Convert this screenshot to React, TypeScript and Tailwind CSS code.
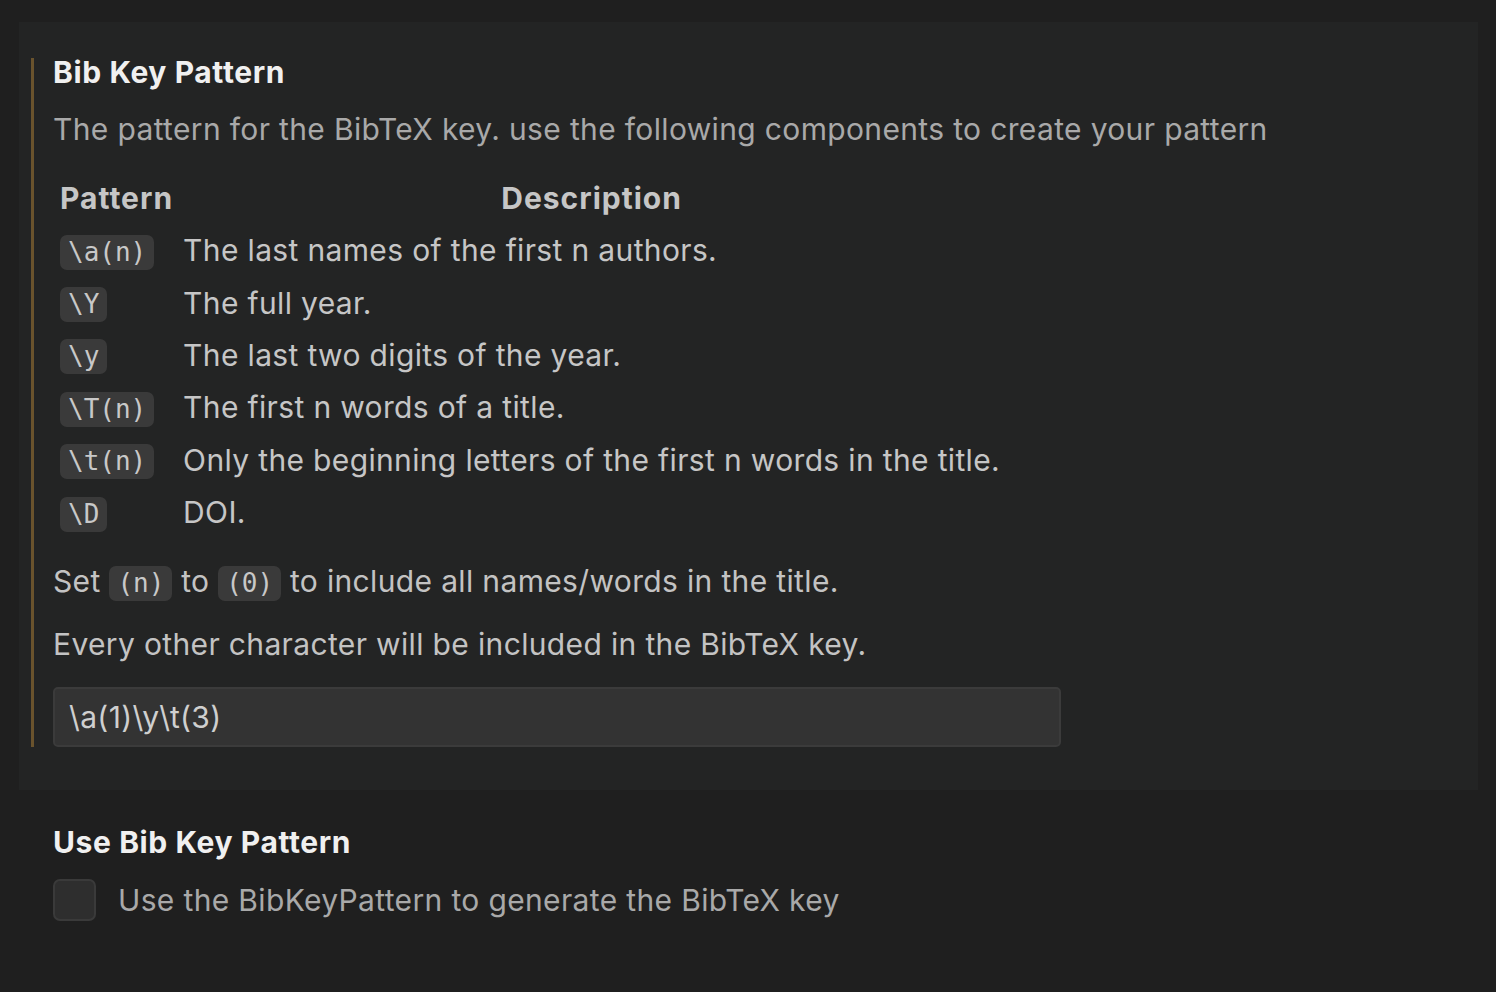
import React from "react";

const rows: { code: string; text: string }[] = [
  { code: "\\a(n)", text: "The last names of the first n authors." },
  { code: "\\Y", text: "The full year." },
  { code: "\\y", text: "The last two digits of the year." },
  { code: "\\T(n)", text: "The first n words of a title." },
  { code: "\\t(n)", text: "Only the beginning letters of the first n words in the title." },
  { code: "\\D", text: "DOI." },
];

function Code({ children }: { children: React.ReactNode }) {
  return (
    <code className="inline-block rounded-[7px] bg-[#3a3a3a] px-[8px] font-['DejaVu_Sans_Mono',monospace] text-[26px] leading-[35px] tracking-normal text-[#c8c8c8]">
      {children}
    </code>
  );
}

export default function App() {
  return (
    <div className="min-h-screen bg-[#1f1f1f] pt-[22px] font-['Inter',sans-serif] tracking-[0.35px]">
      {/* setting: pattern */}
      <div className="ml-[19px] w-[1459px] bg-[#232424] pb-[43px] pt-[36px]">
        <div className="ml-[12px] border-l-[3px] border-[#6a532d] pl-[19px]">
          <h2 className="text-[30px] font-bold leading-[28px] tracking-[0.6px] text-[#f0f0f0]">Bib Key Pattern</h2>
          <p className="mt-[23px] text-[30px] leading-[40px] text-[#a9a9a9]">
            The pattern for the BibTeX key. use the following components to create your pattern
          </p>

          <table className="ml-[2px] mt-[23px] border-separate border-spacing-0 text-[30px] text-[#c6c6c6]">
            <thead>
              <tr className="h-[52px]">
                <th className="px-[5px] text-center font-bold tracking-[1px]">Pattern</th>
                <th className="px-[5px] text-center font-bold tracking-[1px]">Description</th>
              </tr>
            </thead>
            <tbody>
              {rows.map((r) => (
                <tr key={r.code} className="h-[52.4px]">
                  <td className="px-[5px] text-left align-middle">
                    <Code>{r.code}</Code>
                  </td>
                  <td className="px-[5px] text-left align-middle leading-[40px]">{r.text}</td>
                </tr>
              ))}
            </tbody>
          </table>

          <p className="mt-[23px] text-[30px] leading-[40px] text-[#c3c3c3]">
            Set <Code>(n)</Code> to <Code>(0)</Code> to include all names/words in the title.
          </p>
          <p className="mt-[23px] text-[30px] leading-[40px] text-[#c3c3c3]">
            Every other character will be included in the BibTeX key.
          </p>

          <div className="mt-[23px] flex h-[60px] w-[1008px] items-center rounded-[5px] border-2 border-[#3b3b3b] bg-[#333333] px-[14px] text-[30px] text-[#cfcfcf]">
            \a(1)\y\t(3)
          </div>
        </div>
      </div>

      {/* setting: use pattern */}
      <div className="ml-[53px] mt-[38px]">
        <h2 className="text-[30px] font-bold leading-[28px] tracking-[0.6px] text-[#f0f0f0]">Use Bib Key Pattern</h2>
        <div className="mt-[23px] flex items-center gap-[22px]">
          <div className="h-[42px] w-[43px] rounded-[7px] border-2 border-[#3a3a3a] bg-[#2e2e2e]" />
          <span className="text-[30px] leading-[40px] text-[#a9a9a9]">
            Use the BibKeyPattern to generate the BibTeX key
          </span>
        </div>
      </div>
    </div>
  );
}
